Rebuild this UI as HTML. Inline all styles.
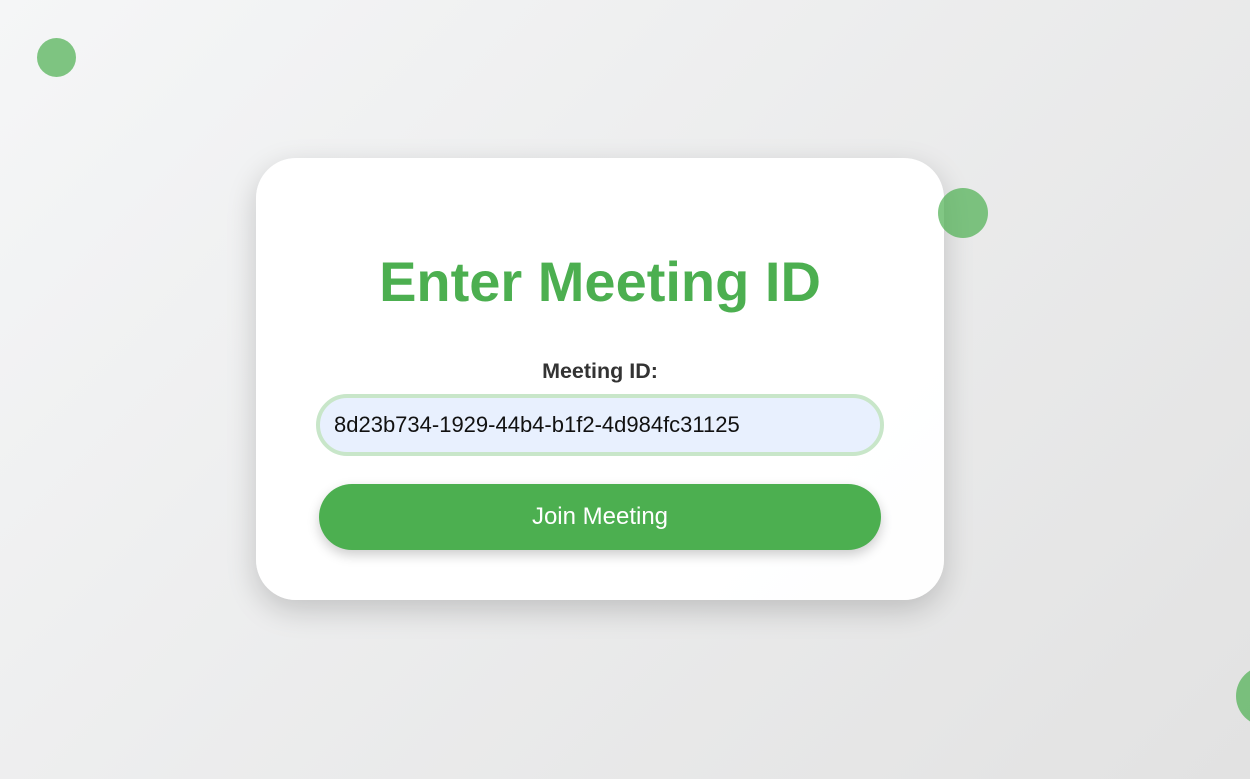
<!DOCTYPE html>
<html><head><style>
html,body{margin:0;width:1250px;height:779px;overflow:hidden;font-family:"Liberation Sans",sans-serif;background:linear-gradient(135deg,#f5f6f7 0%,#e2e2e2 100%);position:relative}
.dot{position:absolute;border-radius:50%;background:#4caf50;opacity:.7}
.card{position:absolute;left:256px;top:158px;width:688px;height:442px;background:rgba(255,255,255,.96);border-radius:40px;box-shadow:0 10px 30px rgba(0,0,0,.18)}
h1{position:absolute;left:256px;width:688px;top:250px;margin:0;text-align:center;color:#4caf50;font-size:56px;font-weight:bold;line-height:64px}
.lbl{position:absolute;left:256px;width:688px;top:359px;text-align:center;font-weight:bold;font-size:21.5px;color:#333}
.inp{position:absolute;left:316px;top:394px;width:568px;height:62px;box-sizing:border-box;border:4px solid #c8e6c9;border-radius:31px;background:#e8f0fe;font-size:22px;padding-left:14px;line-height:54px;color:#111}
.btn{position:absolute;left:319px;top:484px;width:562px;height:66px;border-radius:33px;background:#4caf50;color:#fff;font-size:24px;text-align:center;line-height:66px;box-shadow:0 5px 12px rgba(0,0,0,.2)}
</style></head><body>
<div class="dot" style="left:37px;top:38px;width:39px;height:39px"></div>
<div class="dot" style="left:1236px;top:666px;width:60px;height:60px"></div>
<div class="card"></div>
<div class="dot" style="left:938px;top:188px;width:50px;height:50px"></div>
<h1>Enter Meeting ID</h1>
<div class="lbl">Meeting ID:</div>
<div class="inp">8d23b734-1929-44b4-b1f2-4d984fc31125</div>
<div class="btn">Join Meeting</div>
</body></html>
